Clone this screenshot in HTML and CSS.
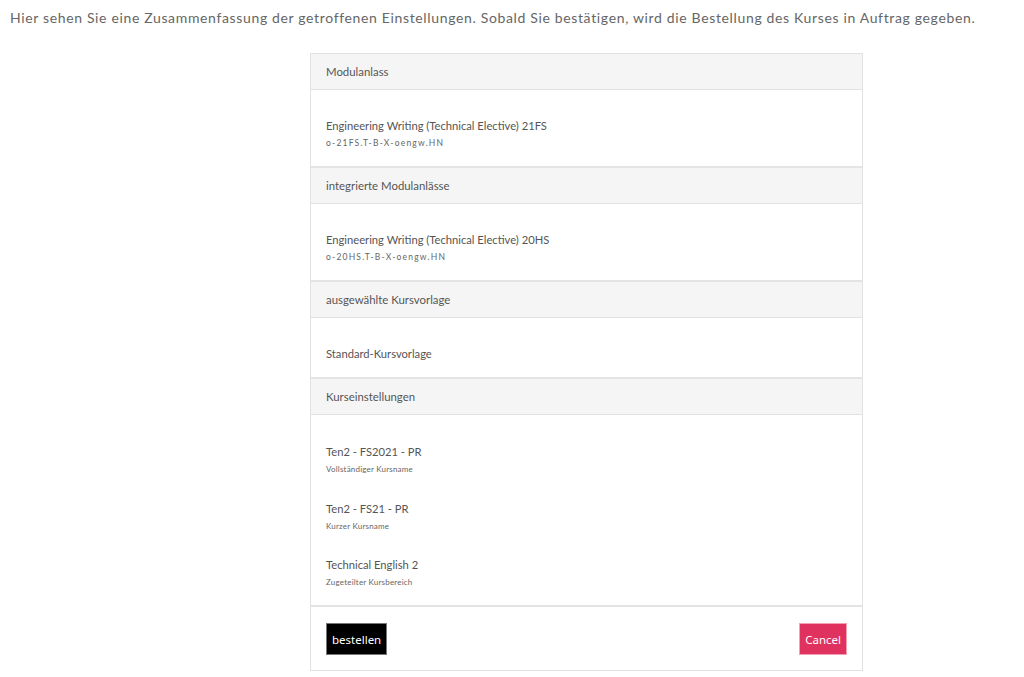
FILE: index.html
```html
<!DOCTYPE html>
<html lang="de">
<head>
    <meta charset="UTF-8">
    <meta name="viewport" content="width=device-width, initial-scale=1.0">
    <title>Bestellung bestätigen</title>
    <link rel="stylesheet" href="styles.css">
</head>
<body>
    <p class="intro">Hier sehen Sie eine Zusammenfassung der getroffenen Einstellungen. Sobald Sie bestätigen, wird die Bestellung des Kurses in Auftrag gegeben.</p>

    <div class="summary">
        <div class="panel">
            <div class="panel-head">Modulanlass</div>
            <div class="panel-body">
                <div class="item">
                    <div class="item-title">Engineering Writing (Technical Elective) 21FS</div>
                    <div class="item-sub code">o-21FS.T-B-X-oengw.HN</div>
                </div>
            </div>
        </div>

        <div class="panel">
            <div class="panel-head">integrierte Modulanlässe</div>
            <div class="panel-body">
                <div class="item">
                    <div class="item-title">Engineering Writing (Technical Elective) 20HS</div>
                    <div class="item-sub code">o-20HS.T-B-X-oengw.HN</div>
                </div>
            </div>
        </div>

        <div class="panel">
            <div class="panel-head">ausgewählte Kursvorlage</div>
            <div class="panel-body single">
                <div class="item">
                    <div class="item-title">Standard-Kursvorlage</div>
                </div>
            </div>
        </div>

        <div class="panel">
            <div class="panel-head">Kurseinstellungen</div>
            <div class="panel-body list">
                <div class="item">
                    <div class="item-title">Ten2 - FS2021 - PR</div>
                    <div class="item-sub">Vollständiger Kursname</div>
                </div>
                <div class="item">
                    <div class="item-title">Ten2 - FS21 - PR</div>
                    <div class="item-sub">Kurzer Kursname</div>
                </div>
                <div class="item">
                    <div class="item-title">Technical English 2</div>
                    <div class="item-sub">Zugeteilter Kursbereich</div>
                </div>
            </div>
        </div>

        <div class="panel actions">
            <button class="btn btn-order">bestellen</button>
            <button class="btn btn-cancel">Cancel</button>
        </div>
    </div>
</body>
</html>
```

FILE: styles.css
```css
body {
    margin: 0;
    font-family: Lato, "Open Sans", sans-serif;
    color: #666;
    background: #fff;
}
.intro {
    margin: 0;
    padding: 9px 10px;
    font-size: 14px;
    line-height: 18px;
    letter-spacing: 0.65px;
    color: #666;
}
.summary {
    width: 551px;
    margin: 17px 0 0 310px;
    border: 1px solid #e2e2e2;
}
.panel + .panel {
    border-top: 2px solid #e4e4e4;
}
.panel-head {
    height: 35px;
    line-height: 35px;
    padding: 0 15px;
    background: #f5f5f5;
    border-bottom: 1px solid #e2e2e2;
    font-size: 11.4px;
    color: #555;
}
.panel-body {
    padding: 27px 15px 16px;
}
.panel-body.single {
    padding-bottom: 14px;
}
.panel-body.list {
    padding-top: 28px;
}
.list .item + .item {
    margin-top: 23.5px;
}
.item-title {
    font-size: 11.2px;
    line-height: 18px;
    color: #555;
}
.item-sub {
    margin-top: 1px;
    font-size: 8px;
    line-height: 14px;
    letter-spacing: 0.2px;
    color: #666;
}
.item-sub.code {
    font-size: 8.5px;
    letter-spacing: 1.2px;
}
.actions {
    display: flex;
    justify-content: space-between;
    padding: 16px 15px 15px;
}
.btn {
    height: 32px;
    padding: 0 5px;
    font-family: "Noto Sans", sans-serif;
    font-size: 11.5px;
    color: #fff;
    cursor: pointer;
}
.btn-order {
    background: #000;
    border: 1px solid #777;
}
.btn-cancel {
    background: #e0325f;
    border: 1px solid #f2a0b4;
}
```
